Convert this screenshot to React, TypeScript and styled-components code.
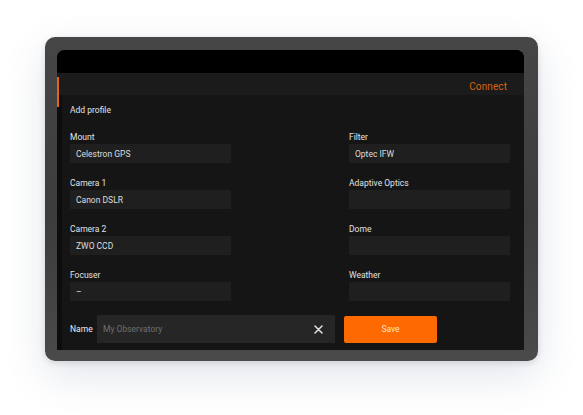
import React from 'react'
import styled, { createGlobalStyle } from 'styled-components'

const GlobalStyle = createGlobalStyle`
  html, body {
    margin: 0;
    padding: 0;
    background: #ffffff;
    font-family: Roboto, "Liberation Sans", Arial, sans-serif;
  }
  * {
    box-sizing: border-box;
  }
`

const Stage = styled.div`
  width: 583px;
  height: 415px;
  padding: 37px 0 0 45px;
  overflow: hidden;
`

const Device = styled.div`
  width: 493px;
  height: 324px;
  padding: 13px 14px 11px 12px;
  border-radius: 10px;
  background: linear-gradient(180deg, #464646 0%, #3c3c3c 55%, #4a4a4a 100%);
  box-shadow: 0 14px 40px rgba(60, 90, 130, 0.16), 0 2px 6px rgba(0, 0, 0, 0.12);
`

const Screen = styled.div`
  position: relative;
  display: flex;
  flex-direction: column;
  height: 100%;
  border-radius: 8px 8px 1px 1px;
  overflow: hidden;
  background: #000;
`

const StatusBar = styled.div`
  height: 23px;
  background: #000;
`

const Header = styled.div`
  height: 22px;
  display: flex;
  align-items: center;
  justify-content: flex-end;
  padding: 4px 17px 0 0;
  background: #1b1b1b;
`

const ConnectLink = styled.span`
  color: #d8650f;
  font-size: 10px;
  letter-spacing: 0.1px;
`

const ActiveMark = styled.div`
  position: absolute;
  left: 0;
  top: 27px;
  width: 2px;
  height: 30px;
  background: #e0670f;
`

const Body = styled.div`
  flex: 1;
  display: flex;
`

const Rail = styled.div`
  width: 5px;
  background: #0d0d0d;
`

const Content = styled.div`
  flex: 1;
  display: flex;
  flex-direction: column;
  padding: 10px 14px 7px 8px;
  background: #151515;
`

const Title = styled.div`
  color: #e4e4e4;
  font-size: 8.5px;
  line-height: 11px;
  margin-bottom: 16px;
`

const FieldGrid = styled.div`
  display: grid;
  grid-template-columns: 161px 161px;
  justify-content: space-between;
  row-gap: 15px;
`

const Field = styled.div`
  display: flex;
  flex-direction: column;
  gap: 1px;
`

const Label = styled.div`
  color: #e2e2e2;
  font-size: 8.5px;
  line-height: 11px;
`

const ValueBox = styled.div`
  height: 19px;
  display: flex;
  align-items: center;
  padding-left: 6px;
  background: #1f1f1f;
  color: #dedede;
  font-size: 8.5px;
`

const NameRow = styled.div`
  display: flex;
  align-items: center;
  margin-top: 14px;
`

const NameLabel = styled.span`
  color: #ececec;
  font-size: 8.5px;
  width: 27px;
`

const NameInput = styled.div`
  width: 238px;
  height: 28px;
  display: flex;
  align-items: center;
  justify-content: space-between;
  padding: 0 12px 0 6px;
  background: #262626;
`

const Placeholder = styled.span`
  color: #6f6f6f;
  font-size: 8.5px;
`

const SaveButton = styled.button`
  margin-left: 9px;
  width: 93px;
  height: 27px;
  border: none;
  border-radius: 2px;
  background: #ff6a00;
  color: #ffe0c8;
  font-family: inherit;
  font-size: 8.5px;
  padding: 0;
`

const fields: [string, string][] = [
  ['Mount', 'Celestron GPS'],
  ['Filter', 'Optec IFW'],
  ['Camera 1', 'Canon DSLR'],
  ['Adaptive Optics', ''],
  ['Camera 2', 'ZWO CCD'],
  ['Dome', ''],
  ['Focuser', '–'],
  ['Weather', ''],
]

const ClearIcon = () => (
  <svg width="9" height="9" viewBox="0 0 9 9">
    <path d="M1 1 L8 8 M8 1 L1 8" stroke="#e0e0e0" strokeWidth="1.5" strokeLinecap="round" />
  </svg>
)

const App = () => {
  return (
    <Stage>
      <GlobalStyle />
      <Device>
        <Screen>
          <StatusBar />
          <Header>
            <ConnectLink>Connect</ConnectLink>
          </Header>
          <Body>
            <Rail />
            <Content>
              <Title>Add profile</Title>
              <FieldGrid>
                {fields.map(([label, value]) => (
                  <Field key={label}>
                    <Label>{label}</Label>
                    <ValueBox>{value}</ValueBox>
                  </Field>
                ))}
              </FieldGrid>
              <NameRow>
                <NameLabel>Name</NameLabel>
                <NameInput>
                  <Placeholder>My Observatory</Placeholder>
                  <ClearIcon />
                </NameInput>
                <SaveButton>Save</SaveButton>
              </NameRow>
            </Content>
          </Body>
          <ActiveMark />
        </Screen>
      </Device>
    </Stage>
  )
}

export default App
